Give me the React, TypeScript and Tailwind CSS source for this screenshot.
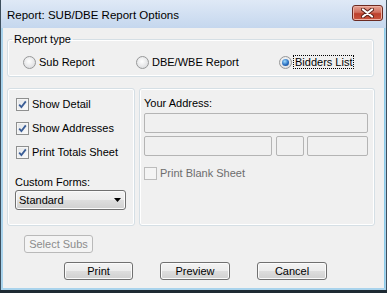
import { ReactNode } from "react";

const ui = "font-['Liberation_Sans',Arial,sans-serif] text-[11px] leading-[13px]";

const Check = ({ checked, disabled }: { checked?: boolean; disabled?: boolean }) => (
  <span
    className={
      "relative flex h-[13px] w-[13px] shrink-0 items-center justify-center border " +
      (disabled
        ? "border-[#bcbcbc] bg-[#f4f4f4]"
        : "border-[#8e8f8f] bg-[linear-gradient(135deg,#e2e4e7,#fbfbfb)] shadow-[inset_0_0_0_1px_#f6f6f6]")
    }
  >
    {checked && (
      <svg width="9" height="9" viewBox="0 0 9 9">
        <path d="M1.2 4.6 L3.4 7 L7.8 1.4" fill="none" stroke="#3a5d96" strokeWidth="1.8" />
      </svg>
    )}
  </span>
);

const Radio = ({ on }: { on?: boolean }) => (
  <span className="flex h-[13px] w-[13px] shrink-0 items-center justify-center rounded-full border border-[#979899] bg-[radial-gradient(circle_at_45%_40%,#ffffff,#dcdddf_80%)]">
    {on && (
      <span className="h-[7px] w-[7px] rounded-full bg-[radial-gradient(circle_at_40%_35%,#9fdcff,#2a6fc0_55%,#0f3c78)]" />
    )}
  </span>
);

const Button = ({ children, w, disabled }: { children: ReactNode; w: string; disabled?: boolean }) => (
  <div
    className={
      "flex h-[18px] items-center justify-center rounded-[3px] border " +
      w +
      (disabled
        ? " border-[#b9b9b9] bg-[#f4f4f4] text-[#8c8c8c]"
        : " border-[#707070] bg-[linear-gradient(#f3f3f3_0%,#ececec_50%,#dedede_50%,#d0d0d0_100%)] shadow-[inset_0_0_0_1px_#fbfbfb] text-black")
    }
  >
    {children}
  </div>
);

const Field = ({ w }: { w: string }) => (
  <div className={"h-[20px] rounded-[2px] border border-[#b4b4b4] bg-[#f0f0f0] " + w} />
);

export default function App() {
  return (
    <div className={"flex h-[293px] w-[387px] flex-col bg-[#1e2a33] " + ui}>
      {/* title bar */}
      <div className="flex h-[28px] items-start justify-between border-x border-[#3d4f5e] bg-[linear-gradient(#dfe9f6,#c5d7ee)] pl-[6px] pr-[3px]">
        <span className="mt-[8px] font-['Liberation_Sans',Arial,sans-serif] text-[11.5px] leading-[14px] text-black">
          Report: SUB/DBE Report Options
        </span>
        <div className="mt-[5px] flex h-[16px] w-[31px] items-center justify-center rounded-[3px] border border-[#6b2a22] bg-[linear-gradient(#e6a394_0%,#d0705f_45%,#bd402c_55%,#c9553f_100%)] shadow-[inset_0_0_0_1px_#eeb3a6]">
          <svg width="13" height="10" viewBox="0 0 13 10">
            <path d="M2 1.5 L11 8.5 M11 1.5 L2 8.5" stroke="#5a2018" strokeWidth="4" strokeLinecap="round" />
            <path d="M2 1.5 L11 8.5 M11 1.5 L2 8.5" stroke="#ffffff" strokeWidth="2.2" strokeLinecap="round" />
          </svg>
        </div>
      </div>

      {/* client area with frame */}
      <div className="flex flex-1 border-x border-[#3d4f5e] bg-[#a9d3ec] pb-[2px] pl-[2px] pr-[1px]">
        <div className="flex h-[260px] flex-1 flex-col border-r border-[#8ccbe8] bg-[#f0f0f0] text-black">
          <fieldset className="mx-[4px] mt-[5px] w-[367px] rounded-[3px] border border-[#d5dfe5] px-0 pb-[7px] shadow-[inset_0_0_0_1px_#ffffff]">
            <legend className="ml-[4px] px-[2px]">Report type</legend>
            <div className="mt-[9px] flex items-center pl-[15px]">
              <div className="flex w-[113px] items-center gap-[3px]">
                <Radio />
                <span>Sub Report</span>
              </div>
              <div className="flex w-[143px] items-center gap-[3px]">
                <Radio />
                <span>DBE/WBE Report</span>
              </div>
              <div className="flex items-center gap-[1px]">
                <Radio on />
                <span className="border border-dotted border-black px-px leading-[12px]">Bidders List</span>
              </div>
            </div>
          </fieldset>

          <div className="mx-[4px] mt-[11px] flex h-[138px] gap-[4px]">
            <div className="flex w-[128px] flex-col rounded-[3px] border border-[#d5dfe5] pl-[7px] pt-[9px] shadow-[inset_0_0_0_1px_#ffffff]">
              <div className="flex flex-col gap-[11px] pl-px">
                <label className="flex items-center gap-[3px]">
                  <Check checked />
                  <span>Show Detail</span>
                </label>
                <label className="flex items-center gap-[3px]">
                  <Check checked />
                  <span>Show Addresses</span>
                </label>
                <label className="flex items-center gap-[3px]">
                  <Check checked />
                  <span>Print Totals Sheet</span>
                </label>
              </div>
              <span className="mt-[17px]">Custom Forms:</span>
              <div className="mt-[1px] flex h-[20px] w-[111px] items-center justify-between rounded-[3px] border border-[#707070] bg-[linear-gradient(#f3f3f3_0%,#ececec_50%,#dedede_50%,#d0d0d0_100%)] pl-[3px] pr-[4px] shadow-[inset_0_0_0_1px_#fbfbfb]">
                <span>Standard</span>
                <svg width="7" height="4" viewBox="0 0 7 4">
                  <path d="M0 0 H7 L3.5 4 Z" fill="#000" />
                </svg>
              </div>
            </div>

            <div className="flex w-[236px] flex-col rounded-[3px] border border-[#d5dfe5] pl-[4px] pt-[8px] shadow-[inset_0_0_0_1px_#ffffff]">
              <span>Your Address:</span>
              <div className="mt-[3px]">
                <Field w="w-[224px]" />
              </div>
              <div className="mt-[3px] flex">
                <Field w="w-[128px]" />
                <div className="ml-[4px]">
                  <Field w="w-[28px]" />
                </div>
                <div className="ml-[3px]">
                  <Field w="w-[61px]" />
                </div>
              </div>
              <label className="mt-[11px] flex items-center gap-[3px] text-[#6d6d6d]">
                <Check disabled />
                <span>Print Blank Sheet</span>
              </label>
            </div>
          </div>

          <div className="ml-[21px] mt-[9px] flex">
            <Button w="w-[69px]" disabled>
              Select Subs
            </Button>
          </div>

          <div className="ml-[61px] mt-[9px] flex gap-[27px]">
            <Button w="w-[69px]">Print</Button>
            <Button w="w-[70px]">Preview</Button>
            <Button w="w-[70px]">Cancel</Button>
          </div>
        </div>
      </div>
      <div className="h-[3px] bg-[#1e2a33]" />
    </div>
  );
}
